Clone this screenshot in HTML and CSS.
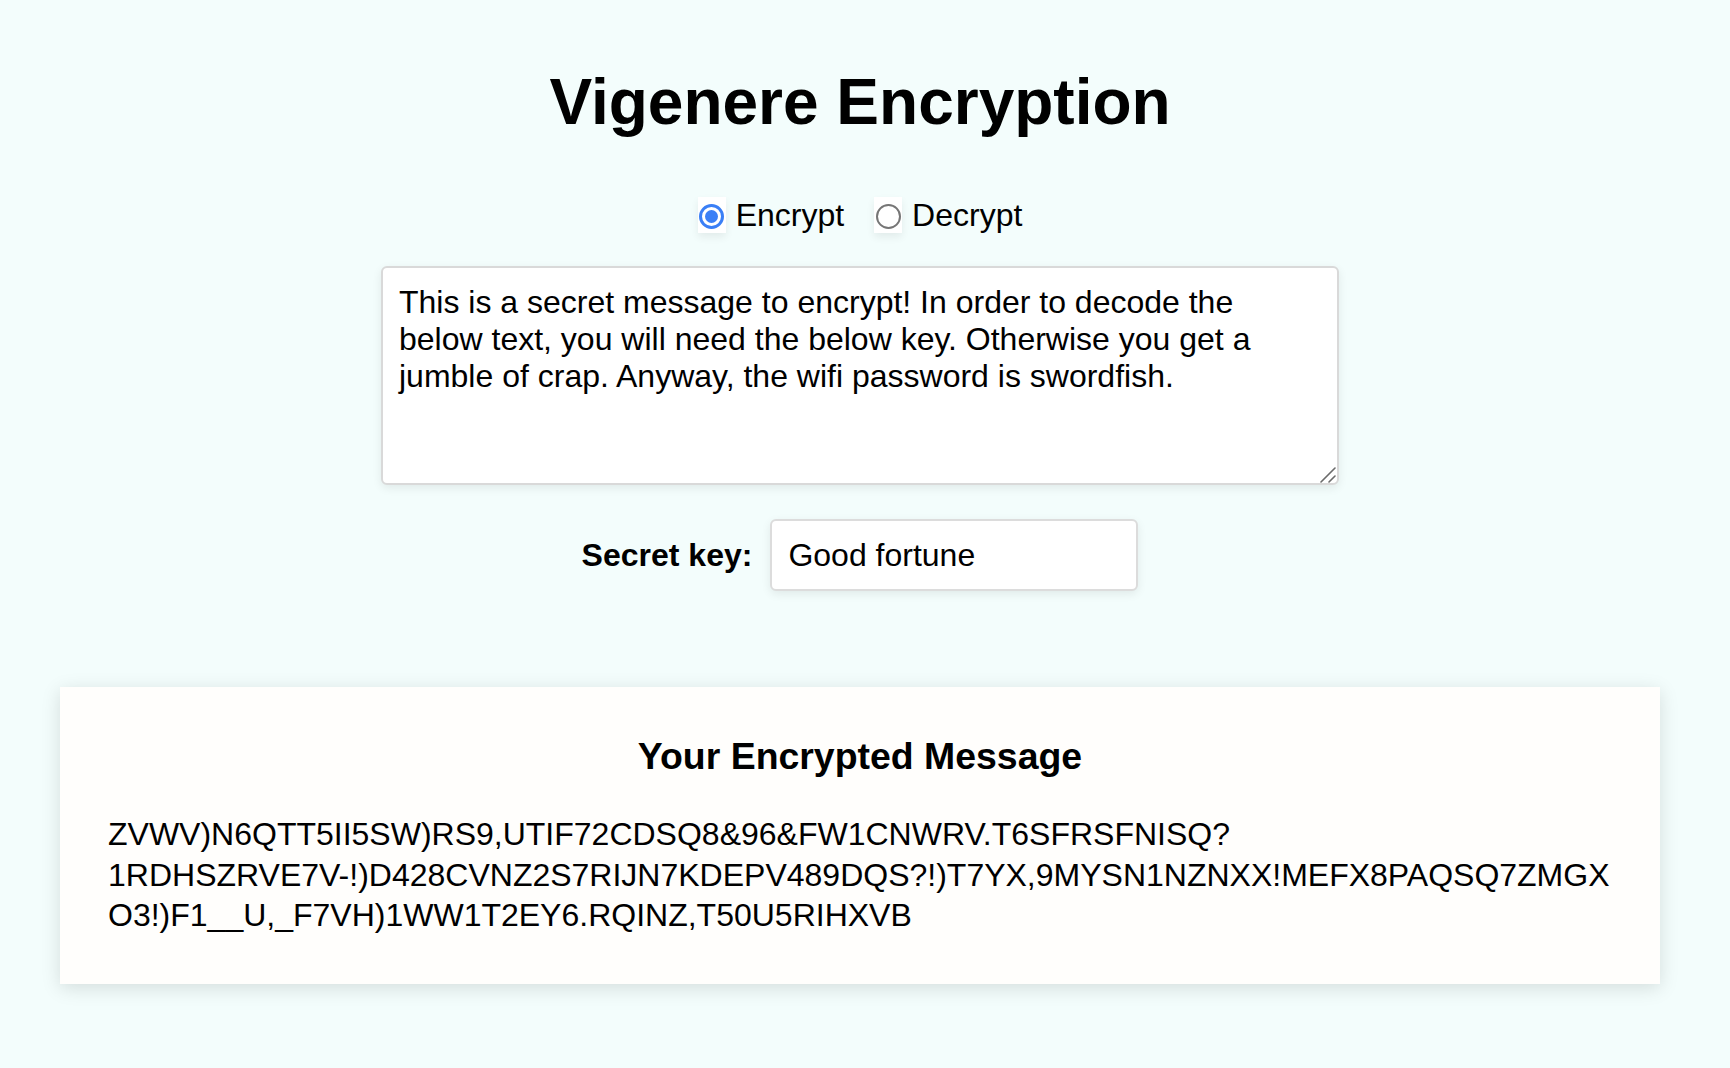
FILE: index.html
```html
<!DOCTYPE html>
<html lang="en">
<head>
<meta charset="utf-8">
<title>Vigenere Encryption</title>
<link rel="stylesheet" href="styles.css">
</head>
<body>
  <main class="page">
    <h1 class="title">Vigenere Encryption</h1>

    <div class="modes">
      <label class="choice">
        <span class="radio-box"><span class="radio is-checked"></span></span>
        <span class="choice-text">Encrypt</span>
      </label>
      <label class="choice">
        <span class="radio-box"><span class="radio"></span></span>
        <span class="choice-text">Decrypt</span>
      </label>
    </div>

    <div class="message-wrap">
      <textarea class="message" spellcheck="false">This is a secret message to encrypt! In order to decode the below text, you will need the below key. Otherwise you get a jumble of crap. Anyway, the wifi password is swordfish.</textarea>
      <svg class="grip" width="16" height="16" viewBox="0 0 16 16" aria-hidden="true">
        <line x1="1" y1="15" x2="15" y2="1" stroke="#6b6b6b" stroke-width="1.6" stroke-linecap="round"/>
        <line x1="9" y1="15" x2="15" y2="9" stroke="#6b6b6b" stroke-width="1.6" stroke-linecap="round"/>
      </svg>
    </div>

    <div class="key-row">
      <label class="key-label" for="key">Secret key:</label>
      <input id="key" class="key-input" type="text" value="Good fortune">
    </div>

    <section class="result">
      <h3 class="result-title">Your Encrypted Message</h3>
      <p class="result-text">ZVWV)N6QTT5II5SW)RS9,UTIF72CDSQ8&amp;96&amp;FW1CNWRV.T6SFRSFNISQ?<br>1RDHSZRVE7V-!)D428CVNZ2S7RIJN7KDEPV489DQS?!)T7YX,9MYSN1NZNXX!MEFX8PAQSQ7ZMGX<br>O3!)F1__U,_F7VH)1WW1T2EY6.RQINZ,T50U5RIHXVB</p>
    </section>
  </main>
</body>
</html>
```

FILE: styles.css
```css
* {
  box-sizing: border-box;
}

html,
body {
  margin: 0;
  background: #f3fdfc;
}

body {
  font-family: "Liberation Sans", Arial, Helvetica, sans-serif;
  font-size: 32px;
  color: #000;
}

.page {
  padding: 65px 70px 60px 60px;
  display: flex;
  flex-direction: column;
  align-items: center;
}

.title {
  margin: 0;
  font-size: 64px;
  font-weight: 700;
  line-height: 74px;
}

.modes {
  margin-top: 58px;
  display: flex;
  gap: 30px;
  align-items: flex-start;
}

.choice {
  display: flex;
  align-items: flex-start;
  gap: 10px;
  line-height: 37px;
}

.radio-box {
  width: 28px;
  height: 36px;
  background: #ffffff;
  box-shadow: 0 4px 8px rgba(0, 0, 0, 0.07);
  display: flex;
  justify-content: center;
  padding-top: 7px;
}

.radio {
  position: relative;
  width: 25px;
  height: 25px;
  border-radius: 50%;
  border: 2px solid #767676;
  background: #fff;
}

.radio.is-checked {
  border: 3px solid #3a7ff6;
}

.radio.is-checked::after {
  content: "";
  position: absolute;
  left: 3px;
  top: 3px;
  width: 13px;
  height: 13px;
  border-radius: 50%;
  background: #3a7ff6;
}

.message-wrap {
  position: relative;
  margin-top: 32px;
  width: 958px;
  height: 219px;
}

.message {
  display: block;
  width: 100%;
  height: 100%;
  margin: 0;
  padding: 16px 32px 16px 16px;
  border: 2px solid #d9d9d9;
  border-radius: 6px;
  background: #fff;
  box-shadow: 0 3px 10px rgba(0, 0, 0, 0.08);
  font-family: "Liberation Sans", Arial, Helvetica, sans-serif;
  font-size: 32px;
  line-height: 37px;
  color: #000;
  resize: none;
  overflow: hidden;
  outline: none;
}

.grip {
  position: absolute;
  right: 3px;
  bottom: 2px;
}

.key-row {
  margin-top: 34px;
  display: flex;
  align-items: center;
  gap: 18px;
}

.key-label {
  font-weight: 700;
  font-size: 32px;
}

.key-input {
  width: 368px;
  height: 72px;
  margin: 0;
  padding: 0 16px;
  border: 2px solid #dcdcdc;
  border-radius: 6px;
  background: #fff;
  box-shadow: 0 3px 10px rgba(0, 0, 0, 0.08);
  font-family: "Liberation Sans", Arial, Helvetica, sans-serif;
  font-size: 32px;
  color: #000;
  outline: none;
}

.result {
  margin-top: 96px;
  width: 1600px;
  padding: 48px;
  background: #fffefc;
  box-shadow: 0 4px 18px rgba(0, 0, 0, 0.13);
}

.result-title {
  margin: 0;
  text-align: center;
  font-size: 37.44px;
  font-weight: 700;
  line-height: 43px;
}

.result-text {
  margin: 36px 0 0;
  font-size: 32px;
  line-height: 40.5px;
  overflow-wrap: anywhere;
}
```
